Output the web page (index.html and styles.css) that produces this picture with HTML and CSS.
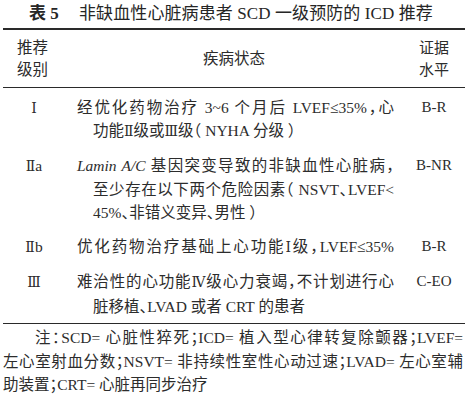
FILE: index.html
```html
<!DOCTYPE html>
<html lang="zh-CN">
<head>
<meta charset="utf-8">
<link rel="stylesheet" href="styles.css">
</head>
<body>
<div class="page">
  <h1 class="title"><b class="tno">表 5</b><span class="ttext">非缺血性心脏病患者 SCD 一级预防的 ICD 推荐</span></h1>
  <div class="table">
    <div class="row head">
      <div class="c1">推荐<br>级别</div>
      <div class="c2 hc">疾病状态</div>
      <div class="c3">证据<br>水平</div>
    </div>
    <div class="tbody">
      <div class="row">
        <div class="c1"><span class="rn">Ⅰ</span></div>
        <div class="c2">
          <span class="ln first j">经优化药物治疗 3~6 个月后 LVEF≤35%，心</span>
          <span class="ln">功能<span class="rn">Ⅱ</span>级或<span class="rn">Ⅲ</span>级（ NYHA 分级 ）</span>
        </div>
        <div class="c3">B-R</div>
      </div>
      <div class="row">
        <div class="c1"><span class="rn">Ⅱ</span>a</div>
        <div class="c2">
          <span class="ln first j"><i>Lamin A/C</i> 基因突变导致的非缺血性心脏病，</span>
          <span class="ln j">至少存在以下两个危险因素（ NSVT、LVEF&lt;</span>
          <span class="ln">45%、非错义变异、男性 ）</span>
        </div>
        <div class="c3">B-NR</div>
      </div>
      <div class="row">
        <div class="c1"><span class="rn">Ⅱ</span>b</div>
        <div class="c2">
          <span class="ln first j">优化药物治疗基础上心功能<span class="rn">Ⅰ</span>级，LVEF≤35%</span>
        </div>
        <div class="c3">B-R</div>
      </div>
      <div class="row">
        <div class="c1"><span class="rn">Ⅲ</span></div>
        <div class="c2">
          <span class="ln first j">难治性的心功能<span class="rn">Ⅳ</span>级心力衰竭，不计划进行心</span>
          <span class="ln">脏移植、LVAD 或者 CRT 的患者</span>
        </div>
        <div class="c3">C-EO</div>
      </div>
    </div>
  </div>
  <div class="note">
    <span class="ln j indent">注：SCD= 心脏性猝死；ICD= 植入型心律转复除颤器；LVEF=</span>
    <span class="ln j">左心室射血分数；NSVT= 非持续性室性心动过速；LVAD= 左心室辅</span>
    <span class="ln">助装置；CRT= 心脏再同步治疗</span>
  </div>
</div>
</body>
</html>
```

FILE: styles.css
```css
html, body {
  margin: 0;
  padding: 0;
  background: #ffffff;
}

body {
  font-family: "Liberation Serif", "Noto Sans CJK SC", serif;
  font-size: 15.5px;
  color: #2c2c2c;
}

.page {
  width: 462px;
  padding-left: 3px;
}

.title {
  margin: 0;
  height: 28px;
  box-sizing: border-box;
  padding: 4px 0 4px 26px;
  display: flex;
  align-items: center;
  font-size: 17px;
  line-height: 20px;
  font-weight: normal;
  color: #262626;
}

.tno {
  font-weight: bold;
  width: 50px;
  flex: none;
}

.ttext {
  white-space: nowrap;
  letter-spacing: 0.1px;
}

.table {
  border-top: 2px solid #2a2a2a;
  border-bottom: 1px solid #2a2a2a;
}

.row {
  display: grid;
  grid-template-columns: 62px 1fr 62px;
}

.head {
  padding: 7px 0 6px;
  line-height: 22px;
  border-bottom: 1px solid #2a2a2a;
  align-items: center;
}

.head .c1 {
  text-align: left;
  padding-left: 14px;
}

.head .c3 {
  text-align: center;
}

.hc {
  text-align: center;
}

.tbody {
  display: flex;
  flex-direction: column;
  gap: 10.5px;
  padding: 7.5px 0 5px;
  line-height: 23.5px;
}

.c1 {
  text-align: center;
}

.c3 {
  text-align: center;
  font-size: 15px;
}

.tbody .c2 {
  padding: 0 9px 0 28px;
}

.c2,
.note {
  font-feature-settings: "halt";
}

.ln {
  display: block;
  white-space: nowrap;
}

.ln.first {
  margin-left: -16px;
}

.j {
  text-align: justify;
  text-align-last: justify;
}

.rn {
  font-family: "DejaVu Serif", "Liberation Serif", serif;
  font-size: 14px;
}

.note {
  padding: 2.25px 2px 0 0;
  line-height: 23.5px;
}

.note .indent {
  padding-left: 32px;
}
```
